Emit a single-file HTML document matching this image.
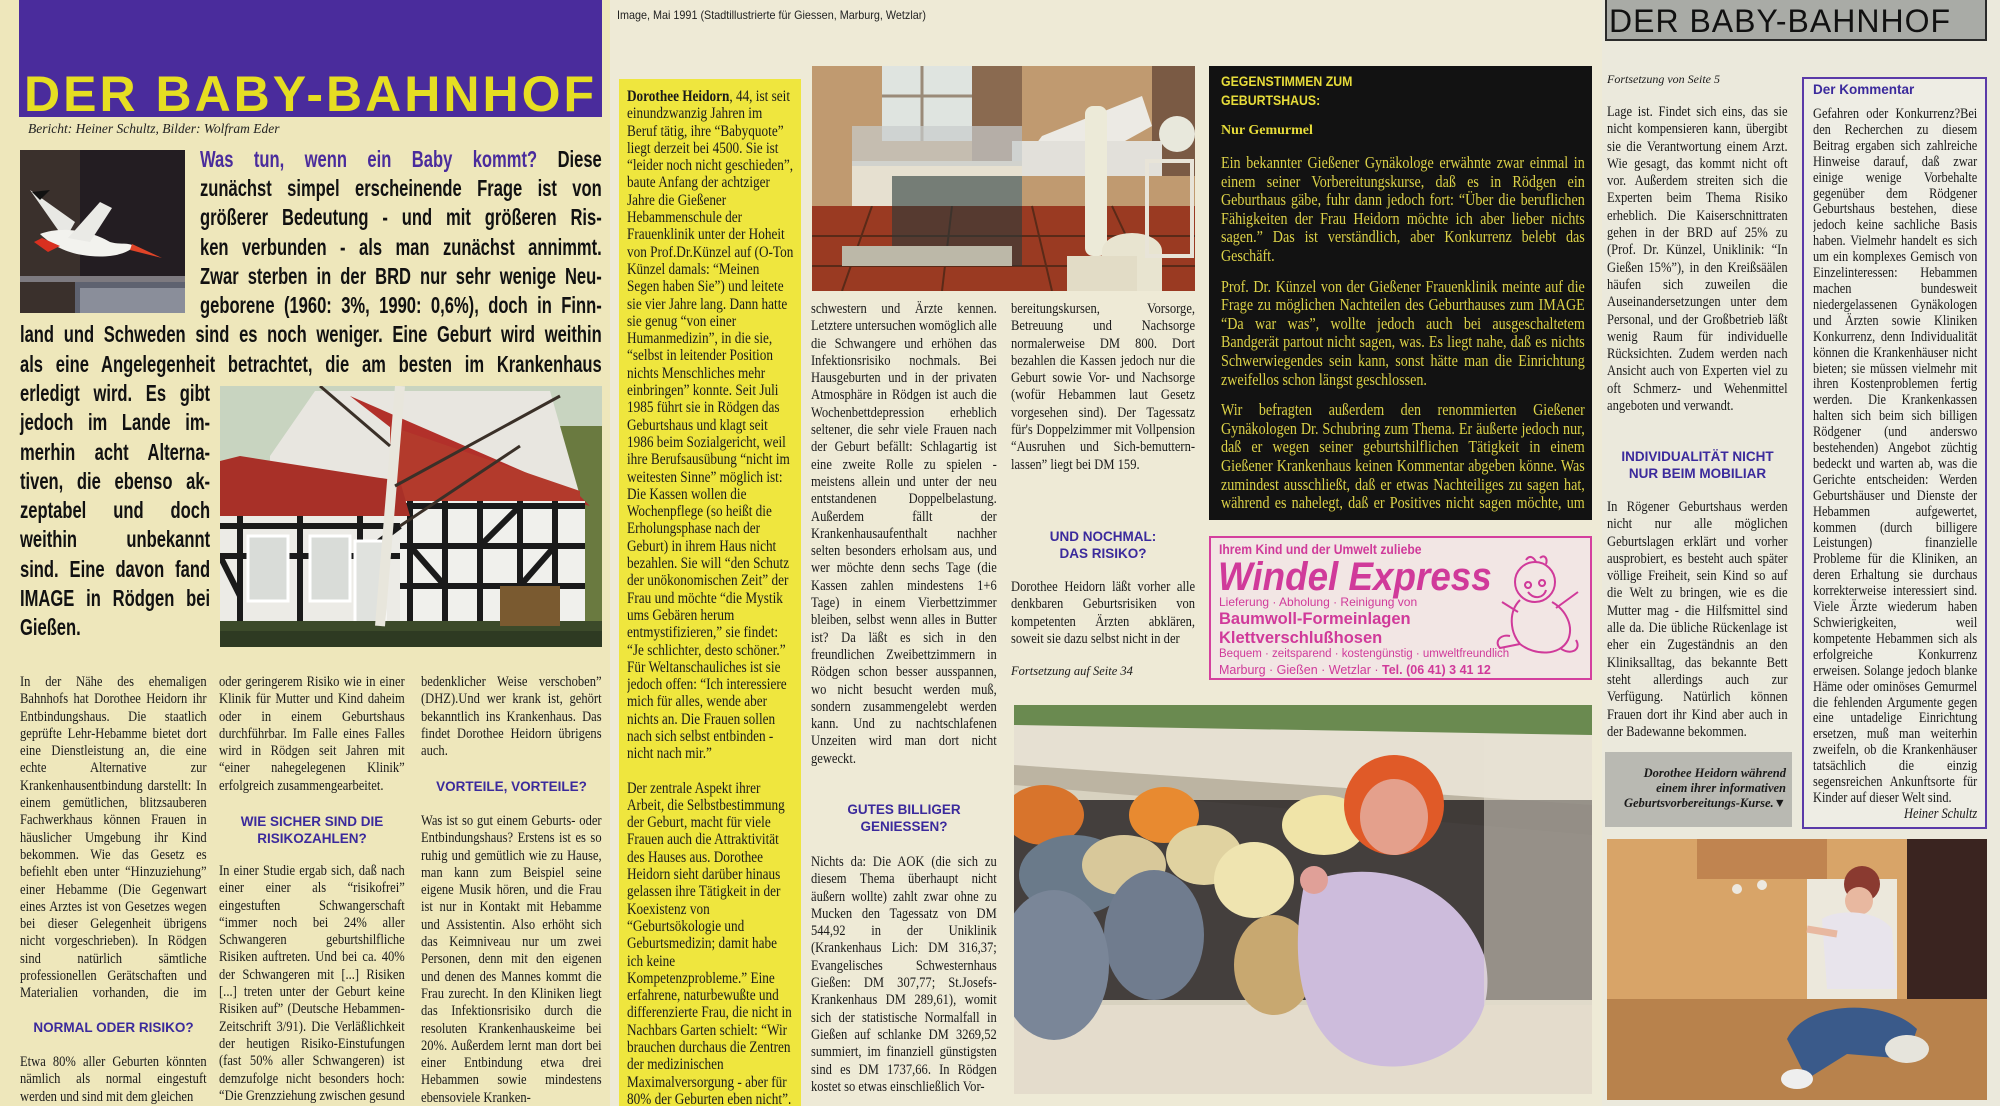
<!DOCTYPE html>
<html lang="de"><head><meta charset="utf-8">
<style>
*{margin:0;padding:0;box-sizing:border-box}
body{width:2000px;height:1106px;position:relative;overflow:hidden;background:#ece8d2;font-family:"Liberation Serif",serif;color:#1a1a1a}
.a{position:absolute}
.pg1{left:0;top:0;width:610px;height:1106px;background:#eee7bb}
.pg2{left:610px;top:0;width:992px;height:1106px;background:#eeead6}
.pg3{left:1602px;top:0;width:398px;height:1106px;background:#ebe9dc}
.col{position:absolute;font-size:14.6px;line-height:17.3px;text-align:justify;hyphens:auto;overflow:hidden;transform:scaleX(.86);transform-origin:0 0}
.h{position:absolute;font-family:"Liberation Sans",sans-serif;font-weight:bold;font-size:13.5px;line-height:17.3px;color:#3b2a9c;text-align:center}
.ln{position:absolute;height:29px;line-height:29px;font-family:"Liberation Sans",sans-serif;font-weight:bold;font-size:23px;white-space:nowrap;text-align:justify;text-align-last:justify;transform:scaleX(.72);transform-origin:0 0;color:#111}
.ln.l{text-align-last:left}
</style></head><body>
<div class="a pg1"></div><div class="a pg2"></div><div class="a pg3"></div>

<!-- PAGE 1 -->
<div class="a" style="left:19px;top:0;width:583px;height:117px;background:#4a2c9c"></div>
<div class="a" style="left:24px;top:66px;width:580px;font-family:'Liberation Sans',sans-serif;font-weight:bold;font-size:50px;letter-spacing:3px;color:#e6de22;line-height:56px;white-space:nowrap;transform:scaleX(1.0);transform-origin:0 0">DER BABY-BAHNHOF</div>
<div class="a" style="left:28px;top:121px;font-style:italic;font-size:13.5px;color:#222">Bericht: Heiner Schultz, Bilder: Wolfram Eder</div>

<svg class="a" style="left:20px;top:150px" width="165" height="163" viewBox="0 0 165 163">
<rect width="165" height="163" fill="#2a2428"/>
<rect x="0" y="0" width="60" height="163" fill="#3a302c"/>
<rect x="60" y="0" width="105" height="130" fill="#231d22"/>
<rect x="0" y="126" width="165" height="6" fill="#7d7a80"/>
<rect x="55" y="132" width="110" height="31" fill="#5e6270"/>
<rect x="60" y="138" width="105" height="25" fill="#8a8e9a"/>
<polygon points="10,40 45,90 55,72" fill="#e8e8e4"/>
<polygon points="12,42 20,50 30,40" fill="#111"/>
<path d="M20,84 C40,76 70,80 90,92 C100,95 108,92 114,96 C108,104 90,108 70,106 C50,104 35,98 20,84Z" fill="#f2f2ee"/>
<polygon points="48,88 80,52 92,58 70,92" fill="#eaeae6"/>
<polygon points="14,92 22,88 40,96 28,102" fill="#d83020"/>
<polygon points="112,94 142,108 110,100" fill="#e04428"/>
</svg>

<div class="ln" style="left:200px;top:145px;width:558px"><span style="color:#4a2c9c">Was tun, wenn ein Baby kommt?</span> Diese</div>
<div class="ln" style="left:200px;top:174px;width:558px">zunächst simpel erscheinende Frage ist von</div>
<div class="ln" style="left:200px;top:203px;width:558px">größerer Bedeutung - und mit größeren Ris-</div>
<div class="ln" style="left:200px;top:233px;width:558px">ken verbunden - als man zunächst annimmt.</div>
<div class="ln" style="left:200px;top:262px;width:558px">Zwar sterben in der BRD nur sehr wenige Neu-</div>
<div class="ln" style="left:200px;top:291px;width:558px">geborene (1960: 3%, 1990: 0,6%), doch in Finn-</div>
<div class="ln" style="left:20px;top:320px;width:808px">land und Schweden sind es noch weniger. Eine Geburt wird weithin</div>
<div class="ln" style="left:20px;top:350px;width:808px">als eine Angelegenheit betrachtet, die am besten im Krankenhaus</div>
<div class="ln" style="left:20px;top:379px;width:264px">erledigt wird. Es gibt</div>
<div class="ln" style="left:20px;top:408px;width:264px">jedoch im Lande im-</div>
<div class="ln" style="left:20px;top:438px;width:264px">merhin acht Alterna-</div>
<div class="ln" style="left:20px;top:467px;width:264px">tiven, die ebenso ak-</div>
<div class="ln" style="left:20px;top:496px;width:264px">zeptabel und doch</div>
<div class="ln" style="left:20px;top:525px;width:264px">weithin unbekannt</div>
<div class="ln" style="left:20px;top:555px;width:264px">sind. Eine davon fand</div>
<div class="ln" style="left:20px;top:584px;width:264px">IMAGE in Rödgen bei</div>
<div class="ln l" style="left:20px;top:613px;width:264px">Gießen.</div>

<svg class="a" style="left:220px;top:386px" width="382" height="261" viewBox="0 0 382 261">
<rect width="382" height="261" fill="#b9c7b0"/>
<rect x="0" y="0" width="382" height="120" fill="#c8d4c0"/>
<rect x="300" y="40" width="82" height="200" fill="#6a7a40"/>
<polygon points="50,70 95,5 330,5 360,110 50,110" fill="#e8e6e0"/>
<polygon points="130,10 360,110 370,120 220,80" fill="#b2302a"/>
<polygon points="170,40 360,105 360,130 170,120" fill="#b33a2c"/>
<rect x="170" y="115" width="195" height="135" fill="#f0f0ec"/>
<g stroke="#1a1a1a" stroke-width="6" fill="none">
<path d="M170,120 H365 M170,160 H365 M170,200 H365 M190,115 V245 M225,115 V245 M260,115 V245 M300,115 V245 M335,115 V245 M190,160 L225,200 M260,160 L300,120 M300,200 L335,160"/>
</g>
<polygon points="0,75 20,70 180,95 190,130 0,130" fill="#a83028"/>
<rect x="0" y="130" width="180" height="120" fill="#ecebe6"/>
<g stroke="#1a1a1a" stroke-width="6" fill="none"><path d="M0,140 H180 M0,170 H180 M20,130 V245 M80,130 V245 M140,130 V245 M0,170 L20,210 M140,170 L180,140"/></g>
<rect x="28" y="150" width="40" height="65" fill="#d9dcd8" stroke="#fff" stroke-width="3"/>
<rect x="90" y="150" width="40" height="65" fill="#d9dcd8" stroke="#fff" stroke-width="3"/>
<rect x="135" y="155" width="30" height="90" fill="#e0e2de" stroke="#fff" stroke-width="3"/>
<rect x="0" y="235" width="382" height="26" fill="#3c4a2a"/>
<rect x="0" y="245" width="382" height="16" fill="#2e3a22"/>
<path d="M160,240 C165,180 170,120 180,0" stroke="#e8e6dc" stroke-width="10" fill="none"/>
<path d="M175,100 L340,10 M180,140 L300,60 M170,60 L100,0" stroke="#3a3028" stroke-width="3" fill="none"/>
<rect x="280" y="200" width="60" height="40" fill="#7a5a30"/>
</svg>

<div class="col" style="left:20px;top:674px;width:217px;height:330px">In der Nähe des ehemaligen Bahnhofs hat Dorothee Heidorn ihr Entbindungshaus. Die staatlich geprüfte Lehr-Hebamme bietet dort eine Dienstleistung an, die eine echte Alternative zur Krankenhausentbindung darstellt: In einem gemütlichen, blitzsauberen Fachwerkhaus können Frauen in häuslicher Umgebung ihr Kind bekommen. Wie das Gesetz es befiehlt eben unter “Hinzuziehung” einer Hebamme (Die Gegenwart eines Arztes ist von Gesetzes wegen bei dieser Gelegenheit übrigens nicht vorgeschrieben). In Rödgen sind natürlich sämtliche professionellen Gerätschaften und Materialien vorhanden, die im Normalfall vonnöten sind.</div>
<div class="h" style="left:20px;top:1019px;width:187px">NORMAL ODER RISIKO?</div>
<div class="col" style="left:20px;top:1054px;width:217px;height:52px">Etwa 80% aller Geburten könnten nämlich als normal eingestuft werden und sind mit dem gleichen</div>

<div class="col" style="left:219px;top:674px;width:216px;height:122px">oder geringerem Risiko wie in einer Klinik für Mutter und Kind daheim oder in einem Geburtshaus durchführbar. Im Falle eines Falles wird in Rödgen seit Jahren mit “einer nahegelegenen Klinik” erfolgreich zusammengearbeitet.</div>
<div class="h" style="left:219px;top:813px;width:186px">WIE SICHER SIND DIE<br>RISIKOZAHLEN?</div>
<div class="col" style="left:219px;top:863px;width:216px;height:243px">In einer Studie ergab sich, daß nach einer einer als “risikofrei” eingestuften Schwangerschaft “immer noch bei 24% aller Schwangeren geburtshilfliche Risiken auftreten. Und bei ca. 40% der Schwangeren mit [...] Risiken [...] treten unter der Geburt keine Risiken auf” (Deutsche Hebammen-Zeitschrift 3/91). Die Verläßlichkeit der heutigen Risiko-Einstufungen (fast 50% aller Schwangeren) ist demzufolge nicht besonders hoch: “Die Grenzziehung zwischen gesund und krank wird in</div>

<div class="col" style="left:421px;top:674px;width:210px;height:87px">bedenklicher Weise verschoben” (DHZ).Und wer krank ist, gehört bekanntlich ins Krankenhaus. Das findet Dorothee Heidorn übrigens auch.</div>
<div class="h" style="left:421px;top:778px;width:181px">VORTEILE, VORTEILE?</div>
<div class="col" style="left:421px;top:813px;width:210px;height:293px">Was ist so gut einem Geburts- oder Entbindungshaus? Erstens ist es so ruhig und gemütlich wie zu Hause, man kann zum Beispiel seine eigene Musik hören, und die Frau ist nur in Kontakt mit Hebamme und Assistentin. Also erhöht sich das Keimniveau nur um zwei Personen, denn mit den eigenen und denen des Mannes kommt die Frau zurecht. In den Kliniken liegt das Infektionsrisiko durch die resoluten Krankenhauskeime bei 20%. Außerdem lernt man dort bei einer Entbindung etwa drei Hebammen sowie mindestens ebensoviele Kranken-</div>

<!-- yellow column -->
<div class="a" style="left:617px;top:8px;font-family:'Liberation Sans',sans-serif;font-size:12px;color:#222;transform:scaleX(.9);transform-origin:0 0;white-space:nowrap">Image, Mai 1991 (Stadtillustrierte für Giessen, Marburg, Wetzlar)</div>
<div class="a" style="left:619px;top:79px;width:182px;height:1027px;background:#efe63e"></div>
<div class="col" style="left:627px;top:88px;width:195px;height:1018px;text-align:left;font-size:15.4px"><b>Dorothee Heidorn</b>, 44, ist seit einundzwanzig Jahren im Beruf tätig, ihre “Babyquote” liegt derzeit bei 4500. Sie ist “leider noch nicht geschieden”, baute Anfang der achtziger Jahre die Gießener Hebammenschule der Frauenklinik unter der Hoheit von Prof.Dr.Künzel auf (O-Ton Künzel damals: “Meinen Segen haben Sie”) und leitete sie vier Jahre lang. Dann hatte sie genug “von einer Humanmedizin”, in die sie, “selbst in leitender Position nichts Menschliches mehr einbringen” konnte. Seit Juli 1985 führt sie in Rödgen das Geburtshaus und klagt seit 1986 beim Sozialgericht, weil ihre Berufsausübung “nicht im weitesten Sinne” möglich ist: Die Kassen wollen die Wochenpflege (so heißt die Erholungsphase nach der Geburt) in ihrem Haus nicht bezahlen. Sie will “den Schutz der unökonomischen Zeit” der Frau und möchte “die Mystik ums Gebären herum entmystifizieren,” sie findet: “Je schlichter, desto schöner.” Für Weltanschauliches ist sie jedoch offen: “Ich interessiere mich für alles, wende aber nichts an. Die Frauen sollen nach sich selbst entbinden - nicht nach mir.”<span style="display:block;height:17px"></span>Der zentrale Aspekt ihrer Arbeit, die Selbstbestimmung der Geburt, macht für viele Frauen auch die Attraktivität des Hauses aus. Dorothee Heidorn sieht darüber hinaus gelassen ihre Tätigkeit in der Koexistenz von “Geburtsökologie und Geburtsmedizin; damit habe ich keine Kompetenzprobleme.” Eine erfahrene, naturbewußte und differenzierte Frau, die nicht in Nachbars Garten schielt: “Wir brauchen durchaus die Zentren der medizinischen Maximalversorgung - aber für 80% der Geburten eben nicht”. <i>hsc</i></div>

<!-- PAGE 2 -->
<svg class="a" style="left:812px;top:66px" width="383" height="225" viewBox="0 0 383 225">
<rect width="383" height="225" fill="#8a5a3a"/>
<rect x="0" y="0" width="383" height="140" fill="#c09a70"/>
<rect x="70" y="0" width="90" height="75" fill="#dfe4e0"/>
<path d="M110,0 V75 M70,30 H160" stroke="#9a8a78" stroke-width="3"/>
<rect x="160" y="0" width="50" height="110" fill="#8a6a50"/>
<rect x="340" y="0" width="43" height="110" fill="#7a5a44"/>
<rect x="0" y="140" width="383" height="85" fill="#9a3a22"/>
<path d="M0,170 H383 M0,200 H383 M60,140 L30,225 M140,140 L130,225 M220,140 L240,225 M300,140 L340,225" stroke="#5a2a18" stroke-width="2"/>
<polygon points="230,70 330,30 340,60 250,110 200,110" fill="#eceae4"/>
<rect x="200" y="75" width="150" height="35" fill="#e2e0da"/>
<rect x="40" y="95" width="170" height="45" fill="#e6e0d0"/>
<rect x="40" y="60" width="170" height="40" fill="#c8cccc" opacity=".7"/>
<rect x="80" y="110" width="130" height="90" fill="#2a3a3a" opacity=".6"/>
<rect x="30" y="180" width="170" height="20" fill="#bcb8a8"/>
<rect x="273" y="40" width="22" height="150" rx="8" fill="#ecead8"/>
<path d="M290,230 V185 a20,12 0 0 1 60,0 V230Z" fill="#e8e4d0"/>
<rect x="255" y="190" width="70" height="35" fill="#e2dcc6"/>
<circle cx="365" cy="68" r="18" fill="#e8e8dc"/>
<rect x="335" y="95" width="45" height="95" fill="none" stroke="#e8e4d8" stroke-width="4"/>
</svg>

<div class="col" style="left:811px;top:301px;width:216px;height:486px">schwestern und Ärzte kennen. Letztere untersuchen womöglich alle die Schwangere und erhöhen das Infektionsrisiko nochmals. Bei Hausgeburten und in der privaten Atmosphäre in Rödgen ist auch die Wochenbettdepression erheblich seltener, die sehr viele Frauen nach der Geburt befällt: Schlagartig ist eine zweite Rolle zu spielen - meistens allein und unter der neu entstandenen Doppelbelastung. Außerdem fällt der Krankenhausaufenthalt nachher selten besonders erholsam aus, und wer möchte denn sechs Tage (die Kassen zahlen mindestens 1+6 Tage) in einem Vierbettzimmer bleiben, selbst wenn alles in Butter ist? Da läßt es sich in den freundlichen Zweibettzimmern in Rödgen schon besser ausspannen, wo nicht besucht werden muß, sondern zusammengelebt werden kann. Und zu nachtschlafenen Unzeiten wird man dort nicht geweckt.</div>
<div class="h" style="left:811px;top:801px;width:186px">GUTES BILLIGER<br>GENIESSEN?</div>
<div class="col" style="left:811px;top:854px;width:216px;height:252px">Nichts da: Die AOK (die sich zu diesem Thema überhaupt nicht äußern wollte) zahlt zwar ohne zu Mucken den Tagessatz von DM 544,92 in der Uniklinik (Krankenhaus Lich: DM 316,37; Evangelisches Schwesternhaus Gießen: DM 307,77; St.Josefs-Krankenhaus DM 289,61), womit sich der statistische Normalfall in Gießen auf schlanke DM 3269,52 summiert, im finanziell günstigsten sind es DM 1737,66. In Rödgen kostet so etwas einschließlich Vor-</div>

<div class="col" style="left:1011px;top:301px;width:214px;height:210px">bereitungskursen, Vorsorge, Betreuung und Nachsorge normalerweise DM 800. Dort bezahlen die Kassen jedoch nur die Geburt sowie Vor- und Nachsorge (wofür Hebammen laut Gesetz vorgesehen sind). Der Tagessatz für's Doppelzimmer mit Vollpension “Ausruhen und Sich-bemuttern-lassen” liegt bei DM 159.</div>
<div class="h" style="left:1011px;top:528px;width:184px">UND NOCHMAL:<br>DAS RISIKO?</div>
<div class="col" style="left:1011px;top:579px;width:214px;height:70px">Dorothee Heidorn läßt vorher alle denkbaren Geburtsrisiken von kompetenten Ärzten abklären, soweit sie dazu selbst nicht in der</div>
<div class="a" style="left:1011px;top:664px;font-style:italic;font-size:12.5px">Fortsetzung auf Seite 34</div>

<!-- dark box -->
<div class="a" style="left:1209px;top:66px;width:383px;height:454px;background:#121212"></div>
<div class="a" style="left:1221px;top:72px;font-family:'Liberation Sans',sans-serif;font-weight:bold;font-size:14px;line-height:19px;color:#e6dc3a;transform:scaleX(.88);transform-origin:0 0">GEGENSTIMMEN ZUM<br>GEBURTSHAUS:</div>
<div class="a" style="left:1221px;top:123px;font-weight:bold;font-size:14px;color:#e6dc3a">Nur Gemurmel</div>
<div class="col" style="left:1221px;top:154px;width:423px;height:360px;color:#dcd248;font-size:16.4px;line-height:18.6px">Ein bekannter Gießener Gynäkologe erwähnte zwar einmal in einem seiner Vorbereitungskurse, daß es in Rödgen ein Geburthaus gäbe, fuhr dann jedoch fort: “Über die beruflichen Fähigkeiten der Frau Heidorn möchte ich aber lieber nichts sagen.” Das ist verständlich, aber Konkurrenz belebt das Geschäft.<br><span style="display:block;height:12px"></span>Prof. Dr. Künzel von der Gießener Frauenklinik meinte auf die Frage zu möglichen Nachteilen des Geburthauses zum IMAGE “Da war was”, wollte jedoch auch bei ausgeschaltetem Bandgerät partout nicht sagen, was. Es liegt nahe, daß es nichts Schwerwiegendes sein kann, sonst hätte man die Einrichtung zweifellos schon längst geschlossen.<br><span style="display:block;height:12px"></span>Wir befragten außerdem den renommierten Gießener Gynäkologen Dr. Schubring zum Thema. Er äußerte jedoch nur, daß er wegen seiner geburtshilflichen Tätigkeit in einem Gießener Krankenhaus keinen Kommentar abgeben könne. Was zumindest ausschließt, daß er etwas Nachteiliges zu sagen hat, während es nahelegt, daß er Positives nicht sagen möchte, um seinem Arbeitgeber keinen vermeidbaren Wettbewerb zu schaffen. <i>hsc</i></div>

<!-- ad -->
<div class="a" style="left:1209px;top:536px;width:383px;height:144px;border:2px solid #d4409e;background:#f2e6e4"></div>
<div class="a" style="left:1219px;top:542px;font-family:'Liberation Sans',sans-serif;font-weight:bold;font-size:13.5px;color:#d03a9a;transform:scaleX(.9);transform-origin:0 0;white-space:nowrap">Ihrem Kind und der Umwelt zuliebe</div>
<div class="a" style="left:1218px;top:554px;font-family:'Liberation Sans',sans-serif;font-weight:bold;font-style:italic;font-size:40px;line-height:46px;color:#d03a9a;white-space:nowrap;transform:scaleX(.92);transform-origin:0 0">Windel Express</div>
<div class="a" style="left:1219px;top:595px;font-family:'Liberation Sans',sans-serif;font-size:12px;color:#d03a9a;white-space:nowrap">Lieferung · Abholung · Reinigung von</div>
<div class="a" style="left:1219px;top:610px;font-family:'Liberation Sans',sans-serif;font-weight:bold;font-size:16.5px;line-height:19px;color:#d03a9a;white-space:nowrap">Baumwoll-Formeinlagen<br>Klettverschlußhosen</div>
<div class="a" style="left:1219px;top:648px;font-family:'Liberation Sans',sans-serif;font-size:11.5px;color:#d03a9a;white-space:nowrap">Bequem · zeitsparend · kostengünstig · umweltfreundlich</div>
<div class="a" style="left:1219px;top:663px;font-family:'Liberation Sans',sans-serif;font-size:12.5px;color:#d03a9a;white-space:nowrap">Marburg · Gießen · Wetzlar · <b>Tel. (06 41) 3 41 12</b></div>
<svg class="a" style="left:1490px;top:552px" width="96" height="110" viewBox="0 0 96 110" fill="none" stroke="#d03a9a" stroke-width="2">
<circle cx="45" cy="30" r="20"/>
<path d="M36,8 C40,2 44,6 46,10 M50,6 C54,2 58,6 56,12 M38,30 a3,3 0 1 0 .1,0 M52,28 a3,3 0 1 0 .1,0 M38,40 C44,48 54,46 56,38"/>
<path d="M30,48 C18,60 20,80 30,92 C45,104 70,104 78,88 C84,74 76,58 62,50"/>
<path d="M28,60 L12,50 M66,56 L88,40 M30,92 L10,96 C4,90 10,82 20,84 M70,96 C80,104 92,98 86,88"/>
</svg>

<!-- baby shoes photo -->
<svg class="a" style="left:1014px;top:705px" width="578" height="389" viewBox="0 0 578 389">
<rect width="578" height="389" fill="#d8d2c0"/>
<rect x="0" y="0" width="578" height="30" fill="#6a8a50"/>
<polygon points="0,20 578,30 578,100 0,60" fill="#e6e0d2"/>
<polygon points="0,60 578,100 578,130 0,80" fill="#bcb4a2"/>
<rect x="0" y="95" width="578" height="200" fill="#2a2626" opacity=".85"/>
<rect x="0" y="300" width="578" height="89" fill="#e4dccc"/>
<ellipse cx="30" cy="110" rx="40" ry="30" fill="#d8742c"/>
<ellipse cx="150" cy="110" rx="35" ry="28" fill="#e88a30"/>
<ellipse cx="60" cy="170" rx="55" ry="40" fill="#6a7a8a"/>
<ellipse cx="110" cy="160" rx="42" ry="30" fill="#d8c89a"/>
<ellipse cx="190" cy="150" rx="38" ry="30" fill="#e0d2a0"/>
<ellipse cx="140" cy="230" rx="50" ry="65" fill="#707c8e"/>
<ellipse cx="40" cy="260" rx="55" ry="75" fill="#7a8698"/>
<ellipse cx="240" cy="175" rx="40" ry="38" fill="#efe4b0"/>
<ellipse cx="310" cy="120" rx="42" ry="30" fill="#f0e4a8"/>
<ellipse cx="260" cy="260" rx="40" ry="50" fill="#c8a870"/>
<ellipse cx="380" cy="100" rx="50" ry="50" fill="#e05a28"/>
<ellipse cx="380" cy="112" rx="34" ry="38" fill="#e4a08c"/>
<path d="M290,180 C350,150 440,170 470,250 C490,330 420,370 360,360 C300,350 270,280 290,180Z" fill="#cdbcdc"/>
<circle cx="300" cy="175" r="14" fill="#e0a098"/>
<rect x="470" y="30" width="108" height="270" fill="#e8e2d4" opacity=".5"/>
</svg>

<!-- PAGE 3 -->
<div class="a" style="left:1605px;top:0;width:382px;height:41px;background:#a9aba6;border:2px solid #2a2a2a;border-top:none"></div>
<div class="a" style="left:1609px;top:2px;width:376px;font-family:'Liberation Sans',sans-serif;font-size:32px;line-height:38px;color:#111;white-space:nowrap;letter-spacing:1px">DER BABY-BAHNHOF</div>
<div class="a" style="left:1607px;top:72px;font-style:italic;font-size:12px">Fortsetzung von Seite 5</div>
<div class="col" style="left:1607px;top:104px;width:210px;height:330px">Lage ist. Findet sich eins, das sie nicht kompensieren kann, übergibt sie die Verantwortung einem Arzt. Wie gesagt, das kommt nicht oft vor. Außerdem streiten sich die Experten beim Thema Risiko erheblich. Die Kaiserschnittraten gehen in der BRD auf 25% zu (Prof. Dr. Künzel, Uniklinik: “In Gießen 15%”), in den Kreißsäälen häufen sich zuweilen die Auseinandersetzungen unter dem Personal, und der Großbetrieb läßt wenig Raum für individuelle Rücksichten. Zudem werden nach Ansicht auch von Experten viel zu oft Schmerz- und Wehenmittel angeboten und verwandt.</div>
<div class="h" style="left:1607px;top:448px;width:181px">INDIVIDUALITÄT NICHT<br>NUR BEIM MOBILIAR</div>
<div class="col" style="left:1607px;top:499px;width:210px;height:244px">In Rögener Geburtshaus werden nicht nur alle möglichen Geburtslagen erklärt und vorher ausprobiert, es besteht auch später völlige Freiheit, sein Kind so auf die Welt zu bringen, wie es die Mutter mag - die Hilfsmittel sind alle da. Die übliche Rückenlage ist eher ein Zugeständnis an den Kliniksalltag, das bekannte Bett steht allerdings auch zur Verfügung. Natürlich können Frauen dort ihr Kind aber auch in der Badewanne bekommen.</div>
<div class="a" style="left:1605px;top:752px;width:187px;height:75px;background:#b9b9b2"></div>
<div class="a" style="left:1610px;top:766px;width:176px;text-align:right;font-style:italic;font-weight:bold;font-size:12.5px;line-height:15px">Dorothee Heidorn während einem ihrer informativen Geburtsvorbereitungs-Kurse.▼</div>

<div class="a" style="left:1802px;top:77px;width:185px;height:752px;border:2px solid #5a3aa8;background:#eeede4"></div>
<div class="a" style="left:1813px;top:82px;font-family:'Liberation Sans',sans-serif;font-weight:bold;font-size:13.5px;color:#3b2a9c">Der Kommentar</div>
<div class="col" style="left:1813px;top:107px;width:191px;height:712px;font-size:14.4px;line-height:15.9px">Gefahren oder Konkurrenz?Bei den Recherchen zu diesem Beitrag ergaben sich zahlreiche Hinweise darauf, daß zwar einige wenige Vorbehalte gegenüber dem Rödgener Geburtshaus bestehen, diese jedoch keine sachliche Basis haben. Vielmehr handelt es sich um ein komplexes Gemisch von Einzelinteressen: Hebammen machen bundesweit niedergelassenen Gynäkologen und Ärzten sowie Kliniken Konkurrenz, denn Individualität können die Krankenhäuser nicht bieten; sie müssen vielmehr mit ihren Kostenproblemen fertig werden. Die Krankenkassen halten sich beim sich billigen Rödgener (und anderswo bestehenden) Angebot züchtig bedeckt und warten ab, was die Gerichte entscheiden: Werden Geburtshäuser und Dienste der Hebammen aufgewertet, kommen (durch billigere Leistungen) finanzielle Probleme für die Kliniken, an deren Erhaltung sie durchaus korrekterweise interessiert sind. Viele Ärzte wiederum haben Schwierigkeiten, weil kompetente Hebammen sich als erfolgreiche Konkurrenz erweisen. Solange jedoch blanke Häme oder ominöses Gemurmel die fehlenden Argumente gegen eine untadelige Einrichtung ersetzen, muß man weiterhin zweifeln, ob die Krankenhäuser tatsächlich die einzig segensreichen Ankunftsorte für Kinder auf dieser Welt sind. <i style="float:right">Heiner Schultz</i></div>

<svg class="a" style="left:1607px;top:839px" width="380" height="261" viewBox="0 0 380 261">
<rect width="380" height="261" fill="#c8925a"/>
<rect x="0" y="0" width="380" height="160" fill="#d8a468"/>
<rect x="90" y="0" width="130" height="40" fill="#c08450"/>
<rect x="300" y="0" width="80" height="200" fill="#3a2420"/>
<rect x="200" y="40" width="90" height="130" fill="#ece8dc"/>
<rect x="0" y="160" width="380" height="101" fill="#b8824c"/>
<circle cx="255" cy="45" r="18" fill="#8a3a30"/>
<circle cx="252" cy="62" r="14" fill="#e8b8a0"/>
<path d="M215,80 C230,70 270,70 285,90 L290,150 L220,150Z" fill="#e8e4ec"/>
<path d="M230,95 L200,90" stroke="#e8b8a0" stroke-width="7"/>
<path d="M180,200 C200,160 280,160 310,190 L300,220 L240,215 L200,240Z" fill="#3a5a8a"/>
<ellipse cx="190" cy="240" rx="16" ry="10" fill="#eeeeee"/>
<ellipse cx="300" cy="210" rx="22" ry="14" fill="#e6e4dc"/>
<circle cx="130" cy="50" r="5" fill="#ece8e0"/><circle cx="155" cy="46" r="5" fill="#ece8e0"/>
</svg>
</body></html>
